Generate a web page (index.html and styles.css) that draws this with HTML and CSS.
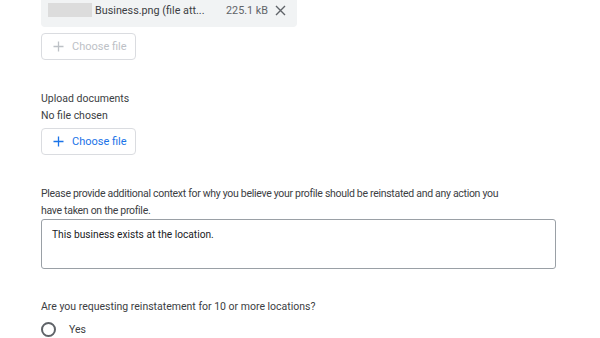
FILE: index.html
```html
<!doctype html>
<html>
  <head>
    <meta charset="UTF-8" />
    <title>Reinstatement request</title>
    <link rel="stylesheet" href="styles.css">
  </head>
  <body>
    <div class="form">
      <div class="file-chip">
        <span class="thumb"></span>
        <span class="file-name">Business.png (file att...</span>
        <span class="file-size">225.1 kB</span>
        <svg class="remove" width="11" height="11" viewBox="0 0 11 11">
          <path d="M1 1 L10 10 M10 1 L1 10" stroke="#5f6368" stroke-width="1.4" fill="none" />
        </svg>
      </div>
      <button class="choose-btn" disabled>
        <svg width="11" height="11" viewBox="0 0 11 11">
          <path d="M5.5 0.5 V10.5 M0.5 5.5 H10.5" stroke="currentColor" stroke-width="1.3" fill="none" />
        </svg>
        Choose file
      </button>

      <div class="field upload">
        <p class="label">Upload documents</p>
        <p class="hint">No file chosen</p>
        <button class="choose-btn">
          <svg width="11" height="11" viewBox="0 0 11 11">
            <path d="M5.5 0.5 V10.5 M0.5 5.5 H10.5" stroke="currentColor" stroke-width="1.3" fill="none" />
          </svg>
          Choose file
        </button>
      </div>

      <div class="field context">
        <p class="label narrow">Please provide additional context for why you believe your profile should be reinstated and any action you have taken on the profile.</p>
        <div class="textbox">This business exists at the location.</div>
      </div>

      <div class="field question">
        <p class="label">Are you requesting reinstatement for 10 or more locations?</p>
        <label class="radio">
          <span class="circle"></span>
          Yes
        </label>
      </div>
    </div>
  </body>
</html>
```
FILE: styles.css
```css
* {
  margin: 0;
  padding: 0;
  box-sizing: border-box;
}

body {
  background: #fff;
  font-family: Roboto, "Liberation Sans", sans-serif;
  font-size: 10.5px;
  color: #3c4043;
}

.form {
  padding-left: 41px;
  width: 556px;
}

.file-chip {
  display: flex;
  align-items: center;
  width: 256px;
  height: 27px;
  padding: 0 0 7px 7px;
  background: #f1f3f4;
  border-radius: 0 0 4px 4px;
  white-space: nowrap;
}

.thumb {
  flex: none;
  width: 44px;
  height: 14px;
  background: #dcdcdc;
  margin-right: 3px;
}

.file-name {
  flex: none;
  width: 131px;
  font-size: 10.8px;
}

.file-size {
  flex: none;
  width: 49px;
  color: #5f6368;
  font-size: 10.8px;
}

.remove {
  flex: none;
}

.choose-btn {
  display: flex;
  align-items: center;
  gap: 8px;
  width: 95px;
  height: 27px;
  margin-top: 6px;
  padding-left: 11px;
  background: #fff;
  border: 1px solid #dadce0;
  border-radius: 4px;
  font-family: inherit;
  font-size: 11px;
  color: #1a73e8;
}

.choose-btn:disabled {
  color: #bdc1c6;
}

.label,
.hint {
  line-height: 17px;
}

.narrow {
  max-width: 470px;
  letter-spacing: -0.3px;
}

.upload {
  margin-top: 30px;
}

.upload .choose-btn {
  margin-top: 4px;
}

.context {
  margin-top: 30px;
}

.textbox {
  height: 50px;
  padding: 6px 10px;
  border: 1px solid #9aa0a6;
  border-radius: 3px;
  line-height: 17px;
  font-size: 10.2px;
  color: #202124;
}

.question {
  margin-top: 29px;
}

.radio {
  display: flex;
  align-items: center;
  gap: 13px;
  margin-top: 7px;
}

.circle {
  width: 15px;
  height: 15px;
  border: 2px solid #5f6368;
  border-radius: 50%;
}
```
